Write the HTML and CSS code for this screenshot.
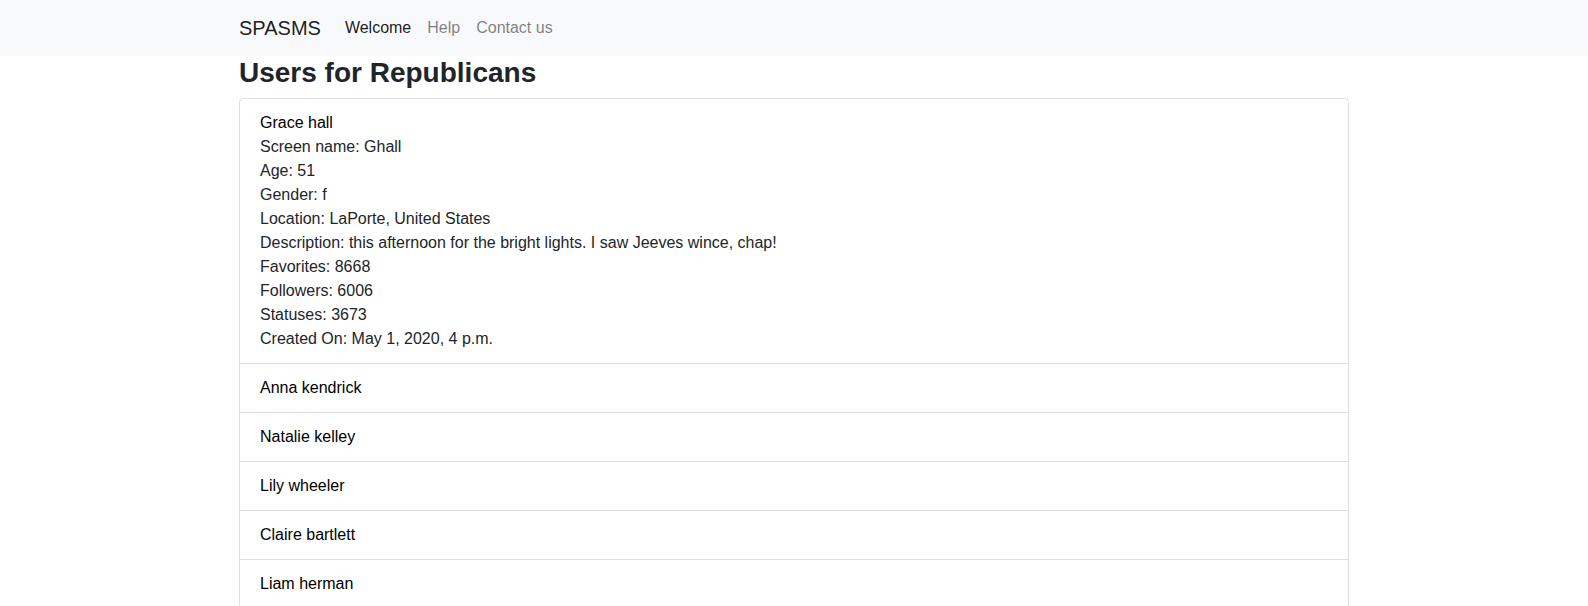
FILE: index.html
```html
<!DOCTYPE html>
<html lang="en">
<head>
<meta charset="utf-8">
<title>SPASMS</title>
<link rel="stylesheet" href="styles.css">
</head>
<body>
<nav class="navbar">
  <div class="container nav-inner">
    <a class="brand" href="#">SPASMS</a>
    <ul class="nav">
      <li><a class="nav-link active" href="#">Welcome</a></li>
      <li><a class="nav-link" href="#">Help</a></li>
      <li><a class="nav-link" href="#">Contact us</a></li>
    </ul>
  </div>
</nav>
<main class="container">
  <h3 class="title">Users for Republicans</h3>
  <ul class="list-group">
    <li class="list-item">
      <div class="name">Grace hall</div>
      <div class="details">
        <div>Screen name: Ghall</div>
        <div>Age: 51</div>
        <div>Gender: f</div>
        <div>Location: LaPorte, United States</div>
        <div>Description: this afternoon for the bright lights. I saw Jeeves wince, chap!</div>
        <div>Favorites: 8668</div>
        <div>Followers: 6006</div>
        <div>Statuses: 3673</div>
        <div>Created On: May 1, 2020, 4 p.m.</div>
      </div>
    </li>
    <li class="list-item"><div class="name">Anna kendrick</div></li>
    <li class="list-item"><div class="name">Natalie kelley</div></li>
    <li class="list-item"><div class="name">Lily wheeler</div></li>
    <li class="list-item"><div class="name">Claire bartlett</div></li>
    <li class="list-item"><div class="name">Liam herman</div></li>
  </ul>
</main>
</body>
</html>
```

FILE: styles.css
```css
* { box-sizing: border-box; }
html, body { margin: 0; padding: 0; }
body {
  font-family: "Liberation Sans", Arial, sans-serif;
  font-size: 16px;
  line-height: 1.5;
  color: #212529;
  background: #fff;
}
.container {
  width: 100%;
  max-width: 1140px;
  padding: 0 15px;
  margin: 0 auto;
}
.navbar {
  background: #f8f9fa;
  padding: 8px 0;
}
.nav-inner {
  display: flex;
  align-items: center;
}
.brand {
  font-size: 20px;
  line-height: 30px;
  padding: 5px 0;
  margin-right: 16px;
  color: rgba(0,0,0,.9);
  text-decoration: none;
}
.nav {
  display: flex;
  list-style: none;
  margin: 0;
  padding: 0;
}
.nav-link {
  display: block;
  padding: 8px;
  color: rgba(0,0,0,.5);
  text-decoration: none;
}
.nav-link.active { color: rgba(0,0,0,.9); }
.title {
  font-size: 28px;
  font-weight: bold;
  line-height: 1.2;
  margin: 0 0 8px;
}
.list-group {
  list-style: none;
  margin: 0;
  padding: 0;
  border: 1px solid rgba(0,0,0,.125);
  border-radius: 4px;
}
.list-item {
  padding: 12px 20px;
  border-top: 1px solid rgba(0,0,0,.125);
}
.list-item:first-child { border-top: 0; }
.name { color: #000; }
```
